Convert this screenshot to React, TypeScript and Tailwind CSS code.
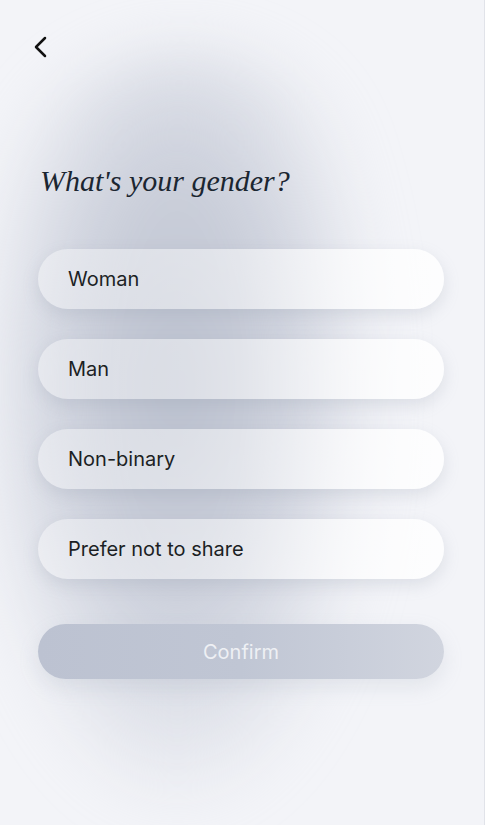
import React, { useState } from "react";

const OPTIONS = ["Woman", "Man", "Non-binary", "Prefer not to share"];

export default function App() {
	const [selected, setSelected] = useState<string | null>(null);

	return (
		<div className="relative min-h-[825px] w-[485px] overflow-hidden border-r border-[#e1e3e9] bg-[#f3f4f8] font-['Inter','Open_Sans',sans-serif]">
			{/* soft backdrop blob */}
			<div className="pointer-events-none absolute left-[-10px] top-[50px] h-[760px] w-[390px] rounded-full bg-[radial-gradient(ellipse_at_48%_44%,#b9bfcd_0%,#cdd1dc_38%,rgba(243,244,248,0)_72%)] blur-[28px]" />

			<div className="relative flex flex-col pl-[38px] pr-[40px] pt-[35px]">
				<button className="-ml-[9px] flex h-[24px] w-[24px] items-center justify-center text-[#111]">
					<svg width="24" height="24" viewBox="0 0 24 24" fill="none" stroke="currentColor" strokeWidth="2.5" strokeLinecap="round" strokeLinejoin="round">
						<path d="M16 3 7 12l9 9" />
					</svg>
				</button>

				<h1 className="mt-[107px] pl-[2px] font-['Liberation_Serif',serif] text-[30px] italic leading-none text-[#1b2631]">
					What's your gender?
				</h1>

				<div className="mt-[53px] flex flex-col gap-[30px]">
					{OPTIONS.map((option) => (
						<button
							key={option}
							onClick={() => setSelected(option)}
							className="flex h-[60px] w-full items-center rounded-full bg-linear-to-r from-white/35 via-white/50 to-white/85 pl-[30px] text-left text-[20px] text-[#1c1f24] shadow-[0_6px_16px_rgba(140,148,170,0.22)]"
						>
							{option}
						</button>
					))}
				</div>

				<button
					disabled={!selected}
					className="mt-[45px] flex h-[55px] w-full items-center justify-center rounded-full bg-linear-to-r from-[#bcc2d1] via-[#c0c6d4] to-[#d1d5df] text-[20px] text-[#eef0f4] shadow-[0_8px_20px_rgba(150,158,178,0.18)]"
				>
					Confirm
				</button>
			</div>
		</div>
	);
}
